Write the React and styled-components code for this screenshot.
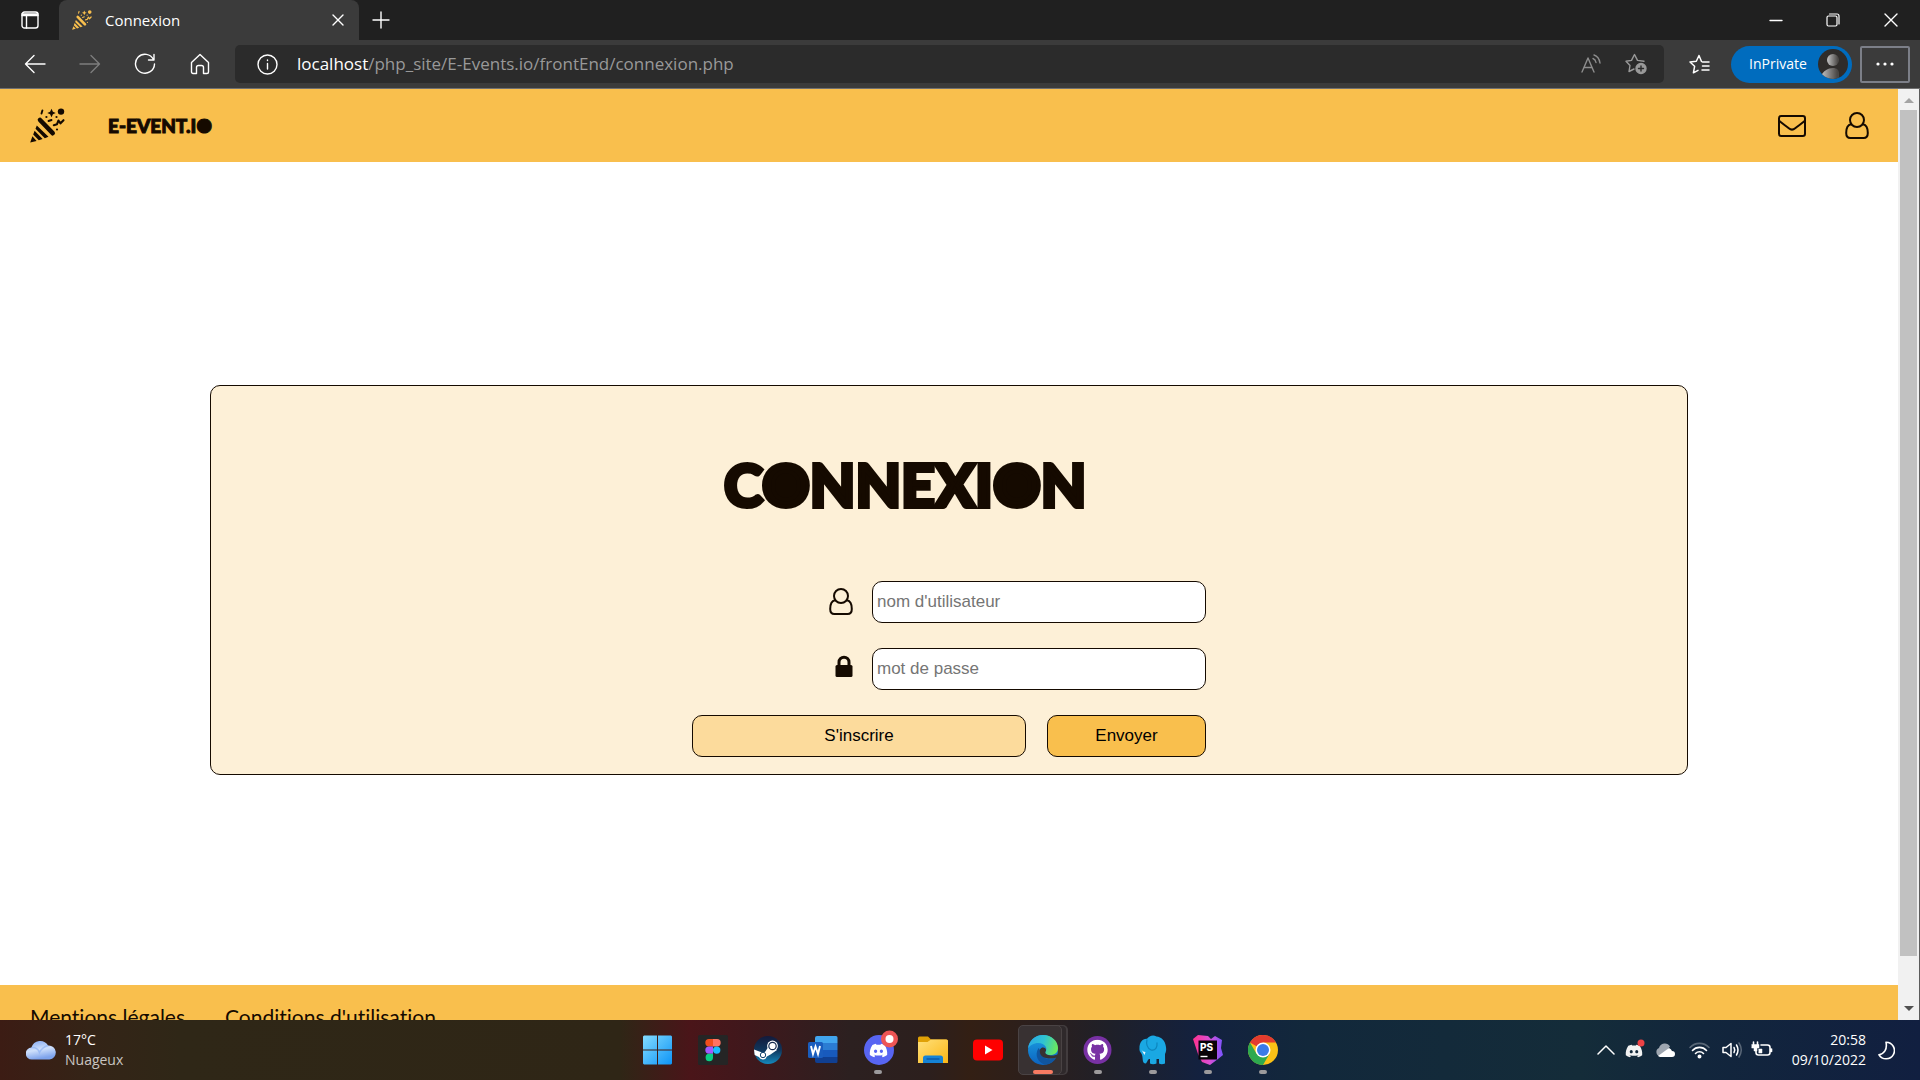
import React from 'react';
import styled, { createGlobalStyle } from 'styled-components';
import { FaDiscord, FaGithub } from 'react-icons/fa';

const GlobalStyle = createGlobalStyle`
  *, *::before, *::after { box-sizing: border-box; }
  html, body { margin: 0; padding: 0; }
  body { overflow: hidden; }
  svg { display: block; flex: none; }
  button { font: inherit; color: inherit; }
`;

const ui = '"Segoe UI", "Open Sans", "Noto Sans", sans-serif';
const sans = 'Arial, "Liberation Sans", sans-serif';
const ink = '#150a00';
const amber = '#f9bf4d';

const Desktop = styled.div`
  display: flex;
  flex-direction: column;
  height: 100vh;
  font-family: ${ui};
`;

/* ---------- Browser chrome ---------- */
const TabStrip = styled.div`
  display: flex;
  height: 40px;
  flex: none;
  background: #202020;
  color: #fff;
`;
const GhostButton = styled.button`
  display: flex;
  align-items: center;
  justify-content: center;
  flex: none;
  width: ${(p) => p.$w}px;
  padding: 0;
  border: 0;
  background: transparent;
  color: ${(p) => p.$color || '#fff'};
`;
const Tab = styled.div`
  display: flex;
  align-items: center;
  gap: 13px;
  width: 300px;
  padding: 0 4px 1px 13px;
  border-radius: 8px 8px 0 0;
  background: #3b3b3b;
  font-size: 15px;
  line-height: 20px;
`;
const TabTitle = styled.span`
  flex: 1;
`;
const WindowButtons = styled.div`
  display: flex;
  margin-left: auto;
`;
const Toolbar = styled.div`
  display: flex;
  align-items: center;
  flex: none;
  height: 49px;
  padding: 0 10px 0 7px;
  border-bottom: 1px solid #707070;
  background: #3b3b3b;
  color: #fff;
`;
const NavButtons = styled.div`
  display: flex;
  height: 38px;
`;
const AddressBar = styled.div`
  display: flex;
  align-items: center;
  flex: 1;
  gap: 19px;
  height: 38px;
  margin-left: 8px;
  padding: 0 17px 0 22px;
  border-radius: 5px;
  background: #2b2b2b;
  color: #999;
`;
const Url = styled.span`
  flex: 1;
  font-size: 17px;
  line-height: 24px;
  white-space: nowrap;
`;
const Host = styled.span`
  color: #fff;
`;
const AddressActions = styled.div`
  display: flex;
  align-items: center;
  gap: 24px;
`;
const Favorites = styled(GhostButton)`
  margin: 0 10px 0 14px;
`;
const PrivateBadge = styled.button`
  display: flex;
  align-items: center;
  justify-content: space-between;
  width: 121px;
  height: 37px;
  margin-right: 8px;
  padding: 0 4px 0 18px;
  border: 0;
  border-radius: 19px;
  background: #006cbe;
  font-size: 14px;
  line-height: 20px;
`;
const MenuButton = styled.button`
  display: flex;
  align-items: center;
  justify-content: center;
  width: 50px;
  height: 37px;
  padding: 0;
  border: 2px solid #7c7f88;
  border-radius: 2px;
  background: transparent;
`;

/* ---------- Web page ---------- */
const Viewport = styled.div`
  display: flex;
  flex: 1;
  min-height: 0;
  border-right: 1px solid #5c5c5c;
  background: #fff;
`;
const Page = styled.div`
  display: flex;
  flex-direction: column;
  flex: 1;
  overflow: hidden;
  color: ${ink};
`;
const SiteHeader = styled.header`
  display: flex;
  align-items: center;
  flex: none;
  height: 73px;
  padding: 0 29px 0 30px;
  background: ${amber};
`;
const Brand = styled.a`
  display: flex;
  align-items: center;
  gap: 43px;
  color: inherit;
  text-decoration: none;
  font: 900 19px/24px Lato, sans-serif;
  -webkit-text-stroke: 1px currentColor;
`;
const HeaderLinks = styled.nav`
  display: flex;
  align-items: center;
  gap: 39px;
  margin-left: auto;
`;
const IconLink = styled.a`
  color: inherit;
`;
/* A capital O whose counter is filled in */
const Disc = styled.span`
  background: radial-gradient(circle closest-side at 50% 50%, currentColor 70%, transparent 72%);
`;
const Main = styled.main`
  display: flex;
  align-items: center;
  flex: 0 0 calc(100% - 108px);
  padding: 12px 210px 0;
`;
const Card = styled.section`
  display: flex;
  flex-direction: column;
  align-items: center;
  flex: 1;
  padding: 63px 0 17px;
  border: 1px solid ${ink};
  border-radius: 10px;
  background: #fdf0d7;
`;
const Form = styled.form`
  display: flex;
  flex-direction: column;
  gap: 25px;
  width: 514px;
`;
const Title = styled.h1`
  margin: 0 0 35px 32px;
  font: 900 59px/72px Lato, sans-serif;
  -webkit-text-stroke: 4px currentColor;
  white-space: nowrap;
`;
const Row = styled.div`
  display: flex;
  justify-content: space-between;
  align-items: center;
`;
const Field = styled.label`
  display: flex;
  align-items: center;
  justify-content: flex-end;
  gap: 19px;
`;
const TextInput = styled.input`
  width: 334px;
  height: 42px;
  padding: 0 4px;
  border: 1px solid ${ink};
  border-radius: 10px;
  background: #fff;
  font: 17px/20px ${sans};
  &::placeholder { color: #757575; }
`;
const FormButton = styled.button`
  width: ${(p) => p.$w}px;
  height: 42px;
  padding: 0;
  border: 1px solid ${ink};
  border-radius: 10px;
  background: ${(p) => p.$bg};
  color: #000;
  font: 17px/20px ${sans};
`;
const SiteFooter = styled.footer`
  display: flex;
  flex: none;
  gap: 40px;
  height: 73px;
  padding: 20px 30px;
  background: ${amber};
`;
const FooterLink = styled.a`
  color: inherit;
  text-decoration: none;
  font: 21px/24px Lato, sans-serif;
  font-variant-ligatures: none;
`;
const ScrollTrack = styled.div`
  display: flex;
  flex-direction: column;
  align-items: center;
  width: 21px;
  padding: 9px 0 8px;
  background: #f1f1f1;
`;
const ScrollThumb = styled.div`
  flex: 0 1 846px;
  width: 17px;
  margin: 6px 0 auto;
  background: #c1c1c1;
`;

/* ---------- Taskbar ---------- */
const Taskbar = styled.footer`
  display: grid;
  grid-template-columns: 1fr auto 1fr;
  align-items: center;
  flex: none;
  height: 60px;
  color: #fff;
  font-size: 14px;
  line-height: 20px;
  background: linear-gradient(90deg, #3c1c14 0, #342417 90px, #2f2717 180px, #2f2616 620px, #4a1519 690px, #3f181c 750px, #2c2020 850px, #2c1f1d 930px, #331f14 970px, #281f20 1060px, #1f2029 1110px, #13213f 1200px, #12283b 1310px, #142c39 1580px, #12263c 1700px, #111f40 1920px);
`;
const Weather = styled.div`
  display: flex;
  align-items: center;
  gap: 9px;
  padding-left: 26px;
`;
const Muted = styled.div`
  color: #c9c5c1;
`;
const Apps = styled.div`
  display: flex;
`;
const AppButton = styled.button`
  display: flex;
  flex-direction: column;
  align-items: center;
  width: 55px;
  height: 50px;
  padding: 10px 0 1px;
  border: 0;
  background: transparent;
`;
const ActiveApp = styled(AppButton)`
  width: 44px;
  margin: 0 8px 0 3px;
  padding: 9px 0 0 6px;
  border: 1px solid #4a4344;
  border-radius: 5px;
  background: #383132;
  box-shadow: 5px 0 0 -1px #2f292b, 6px 0 0 0 #423c3e;
`;
const Indicator = styled.span`
  width: ${(p) => (p.$active ? 20 : 8)}px;
  height: 4px;
  margin-top: auto;
  border-radius: 2px;
  background: ${(p) => (p.$active ? '#f87b62' : '#9c9a9c')};
`;
const Badged = styled.span`
  margin: -6px 0 0 4px;
`;
const Tray = styled.div`
  display: flex;
  align-items: center;
  justify-content: flex-end;
  padding-right: 25px;
`;
const TrayIcons = styled.div`
  display: flex;
  align-items: center;
  gap: 9px;
  margin-right: 19px;
`;
const Clock = styled.div`
  margin-right: 12px;
  text-align: right;
`;

/* ---------- Drawings ---------- */
const Line = ({ w, h = w, vb, sw = 1.4, children }) => (
  <svg width={w} height={h} viewBox={vb || `0 0 ${w} ${h}`} fill="none" stroke="currentColor" strokeWidth={sw} strokeLinecap="round" strokeLinejoin="round" aria-hidden="true">{children}</svg>
);

const Popper = ({ size, color }) => (
  <svg width={size} height={size} viewBox="0 0 35 35" fill={color} aria-hidden="true">
    <path d="M6.800 17.500 18.500 28.800 14.800 30.200 5.500 20.800z M4.600 22.800 12.600 30.900 8.800 32.300 3.200 26.500z M2.400 28.300 6.600 33 .2 34.500z" />
    <path d="M10 12 22.700 25.200" stroke={color} strokeWidth="4.600" strokeLinecap="round" />
    <path d="M21.500 0.800 22.900 3.800 25.700 5 22.900 6.200 21.500 9.200 20.100 6.200 17.300 5 20.100 3.800z" />
    <circle cx="31" cy="3.600" r="3.200" />
    <circle cx="26.500" cy="9" r="1.100" />
    <circle cx="16.400" cy="9" r="1.100" />
    <circle cx="27" cy="21.500" r="1.100" />
    <path d="M12.400 2.500 11.500 5.500 M18.500 13 21.500 12" fill="none" stroke={color} strokeWidth="1.900" strokeLinecap="round" />
    <path d="M23.800 17.200 27 16.200 28.500 12.500 30.500 15.300 33.500 12.200" fill="none" stroke={color} strokeWidth="2.100" strokeLinecap="round" strokeLinejoin="round" />
  </svg>
);
const UserOutline = () => (
  <Line w={24} h={28} sw={2}>
    <circle cx="12" cy="8" r="7" />
    <path d="M6 12.300C3 12.900 1.200 16.300 1.200 21c0 3.200 1.600 5 4.200 5h13.200c2.600 0 4.200-1.800 4.200-5 0-4.700-1.800-8.100-4.800-8.700" />
  </Line>
);
const Envelope = () => (
  <Line w={28} h={22} sw={2}>
    <rect x="1" y="1" width="26" height="20" rx="2.2" />
    <path d="M1.4 6c3 2.600 6.600 5 9.400 7.300 2.300 1.900 4.100 1.900 6.400 0C20 11 23.600 8.600 26.600 6" />
  </Line>
);
const Lock = () => (
  <svg width="18" height="28" viewBox="0 0 18 28" aria-hidden="true">
    <path d="M4 11V7.200a5 5 0 0 1 10 0V11" fill="none" stroke={ink} strokeWidth="3" />
    <rect x="0.500" y="10" width="17" height="12" rx="1.500" fill={ink} />
  </svg>
);

const Avatar = () => (
  <svg width="30" height="30" viewBox="0 0 30 30" aria-hidden="true">
    <defs>
      <linearGradient id="av"><stop stopColor="#c4c4c4" /><stop offset=".9" stopColor="#4a4745" /></linearGradient>
      <clipPath id="avc"><circle cx="15" cy="15" r="15" /></clipPath>
    </defs>
    <circle cx="15" cy="15" r="15" fill="#2f2c2a" />
    <g clipPath="url(#avc)" fill="url(#av)"><circle cx="15" cy="11" r="6" /><path d="M3 27c2-5 7-8 12-8 4 0 6 2 6 6v6H3z" /></g>
  </svg>
);
const Cloud = () => (
  <svg width="30" height="20" viewBox="0 0 30 20" aria-hidden="true">
    <defs><linearGradient id="cl" x1="0" y1="0" x2="0.300" y2="1"><stop stopColor="#7fa6f2" /><stop offset=".55" stopColor="#cfe0fb" /><stop offset="1" stopColor="#7ea3ec" /></linearGradient></defs>
    <path d="M6 19.500a6 6 0 0 1-.5-12A9 9 0 0 1 22 5.500a7 7 0 0 1 1.500 14z" fill="url(#cl)" />
    <path d="M5.500 7.500c4-.5 7 2 8 5 2-4 5-6 8.500-7" fill="none" stroke="#8fb2f4" strokeWidth="1.500" opacity=".7" />
  </svg>
);
const Icon = ({ children }) => <svg width="30" height="30" viewBox="0 0 30 30" aria-hidden="true">{children}</svg>;

const Windows = () => (
  <Icon>
    <defs><linearGradient id="wn" x1="0" y1="0" x2="1" y2="1"><stop stopColor="#84dcff" /><stop offset="1" stopColor="#0d94f6" /></linearGradient></defs>
    <path d="M1 .5h13v14H0v-13zM15 .5h13l1 1v13H15zM0 15.500h14v14H1l-1-1zM15 15.500h14v13l-1 1H15z" fill="url(#wn)" />
  </Icon>
);
const Figma = () => (
  <Icon>
    <rect width="30" height="30" rx="1.500" fill="#252525" />
    <path d="M15 4h-4a3.700 3.700 0 0 0 0 7.400h4z" fill="#f24e1e" /><path d="M15 4h4a3.700 3.700 0 0 1 0 7.400h-4z" fill="#ff7262" />
    <path d="M15 11.400h-4a3.700 3.700 0 0 0 0 7.400h4z" fill="#a259ff" /><circle cx="18.700" cy="15.100" r="3.700" fill="#1abcfe" />
    <path d="M15 18.800h-4a3.700 3.700 0 1 0 4 3.700z" fill="#0acf83" />
  </Icon>
);
const Steam = () => (
  <Icon>
    <defs><linearGradient id="st" x1="0" y1="0" x2="0" y2="1"><stop stopColor="#131a3b" /><stop offset=".5" stopColor="#10365c" /><stop offset="1" stopColor="#1489bd" /></linearGradient></defs>
    <circle cx="15" cy="15" r="14" fill="url(#st)" />
    <path d="M1 14.500 9 17.600l3-.7 3.500-5.200L24 15l-6.500 4.500-3.600 2a4.300 4.300 0 0 1-8 .6L1.700 20z" fill="#fff" />
    <circle cx="19.500" cy="11" r="5.400" fill="#fff" /><circle cx="19.500" cy="11" r="3.700" fill="none" stroke="#14294d" strokeWidth="1.200" />
    <circle cx="10" cy="20" r="2.700" fill="none" stroke="#14456f" strokeWidth="1" />
  </Icon>
);
const Word = () => (
  <Icon>
    <path d="M7 3a2 2 0 0 1 2-2h19a1.500 1.500 0 0 1 1.500 1.500V8H7z" fill="#41a5ee" /><path d="M7 8h22.500v7H7z" fill="#2b7cd3" />
    <path d="M7 15h22.500v7H7z" fill="#185abd" /><path d="M7 22h22.500v4.500A1.500 1.500 0 0 1 28 28H9a2 2 0 0 1-2-2z" fill="#103f91" />
    <rect y="7" width="15" height="16" rx="1.500" fill="#1a5dbe" />
    <path d="m3 11 2 8 2.500-7.500L10 19l2-8" fill="none" stroke="#fff" strokeWidth="1.900" />
  </Icon>
);
const Discord = () => (
  <Badged>
    <svg width="36" height="36" viewBox="-2 -6 36 36" aria-hidden="true">
      <circle cx="15" cy="15" r="15" fill="#5865f2" />
      <g transform="translate(5 6)"><FaDiscord size={19} color="#fff" /></g>
      <circle cx="25.500" cy="4" r="8.500" fill="#ed5555" /><circle cx="25.500" cy="4" r="4" fill="#fff" />
    </svg>
  </Badged>
);
const Folder = () => (
  <Icon>
    <defs><linearGradient id="fo" x1="0" y1="0" x2="1" y2="1"><stop stopColor="#ffe07a" /><stop offset="1" stopColor="#fbb716" /></linearGradient></defs>
    <path d="M0 3a1.500 1.500 0 0 1 1.500-1.500H10L13 4.500H28A2 2 0 0 1 30 6.500V12H0z" fill="#e0a106" />
    <path d="M0 7h9.500L13 4.500h15.500A1.500 1.500 0 0 1 30 6v22H0z" fill="url(#fo)" />
    <path d="M5 28v-5a2.500 2.500 0 0 1 2.500-2.500h15A2.500 2.500 0 0 1 25 23v5z" fill="#1583d6" /><path d="M8.500 24h13" stroke="#0b58a8" strokeWidth="1.500" />
  </Icon>
);
const YouTube = () => (
  <Icon><rect y="4.500" width="30" height="21" rx="4" fill="#f00" /><path d="M12 10.500v9l7.500-4.500z" fill="#fff" /></Icon>
);
const Edge = () => (
  <Icon>
    <defs>
      <linearGradient id="e1" x1="0" y1=".3" x2="1" y2=".5"><stop stopColor="#2aa9e6" /><stop offset=".5" stopColor="#2fc3d2" /><stop offset="1" stopColor="#6bea5b" /></linearGradient>
      <linearGradient id="e2" x1="0" y1="0" x2="0" y2="1"><stop stopColor="#1ba0e2" /><stop offset="1" stopColor="#0c63c0" /></linearGradient>
    </defs>
    <circle cx="15" cy="15" r="15" fill="url(#e2)" />
    <path d="M10.500 13C6 20 10 28.500 18 29.700c4.500-.6 8-3.200 10-6.700-7 3-15.500 0-15.300-7z" fill="#10559f" />
    <path d="M0 13.500C1 5.500 7 0 15 0c8.500 0 15 6 15 13 0 4.500-3.500 7-7.500 7-4.500 0-6-1.500-5-3 2.500-3.500-.5-9-7-9C5.500 8 1.500 10.500 0 13.500z" fill="url(#e1)" />
    <path d="M12 14.500c1.500-3 5.500-2.500 6 .3.200 1.200-.8 1.900-.7 3 .2 2.300 5.700 3.500 10.500 2.200 2.500-1.500 2.400 0 1.200 2.200C25 24.500 10 25 12 14.500z" fill="#383132" />
  </Icon>
);
const GitHub = () => (
  <Icon><circle cx="14.500" cy="15" r="14" fill="#7831a4" /><g transform="translate(4 4.500)"><FaGithub size={21} color="#fff" /></g></Icon>
);
const Elephant = () => (
  <Icon>
    <path d="M1.500 15C1 8 4 3.500 9 3.800 11 1 15-.5 18.500 1.500c5 .5 8.500 4 9.300 9.500.8 4 .2 6-.8 8v9.500c-2 1-4.500 1-6 0V24h-2.500v4.500c-2 1-5 1-6.500 0V24c-1.500 0-2 .5-2.500 2l-1.500 2.500C3 28.500 6 22 3 18c-1-1-1.500-2-1.500-3z" fill="#1aa8e3" />
    <path d="M9 4.500c-1 4 0 9 4 10.500 4.500 1 6.500-3 6-7.500" fill="none" stroke="#0d85bd" strokeWidth="1.200" /><path d="M3 14c1 2 2.500 3 4.500 3L6.500 20z" fill="#e9f6fc" />
  </Icon>
);
const PhpStorm = () => (
  <Icon>
    <defs><linearGradient id="ps"><stop stopColor="#ff318c" /><stop offset=".55" stopColor="#d94fd5" /><stop offset="1" stopColor="#7a55ff" /></linearGradient></defs>
    <path d="M0 4 5 0l10 1 3 3 4-3 7 4-1 8 2 7-5 4-8 6-8-3-4-8z" fill="url(#ps)" />
    <rect x="5.500" y="5.500" width="18.500" height="19" fill="#080308" />
    <text x="7" y="15.500" fontFamily="Inter, sans-serif" fontSize="10" fontWeight="800" fill="#fff">PS</text><path d="M7.500 21.500h7" stroke="#fff" strokeWidth="1.400" />
  </Icon>
);
const Chrome = () => (
  <Icon>
    <circle cx="15" cy="15" r="15" fill="#fbc116" />
    <path d="M15 15 2 7.500A15 15 0 0 1 28 7.500H15z" fill="#e33b2e" /><path d="M2 7.500A15 15 0 0 0 15 30l6.500-11.200L15 15l-6.500 3.800z" fill="#2da94f" />
    <circle cx="15" cy="15" r="7.500" fill="#fff" /><circle cx="15" cy="15" r="6" fill="#3a7be8" />
  </Icon>
);

const leading = [['Démarrer', Windows], ['Figma', Figma], ['Steam', Steam], ['Word', Word], ['Discord', Discord, true], ['Explorateur', Folder], ['YouTube', YouTube]];
const trailing = [['GitHub Desktop', GitHub, true], ['MAMP', Elephant, true], ['PhpStorm', PhpStorm, true], ['Chrome', Chrome, true]];
const renderApp = ([name, Glyph, running]) => (
  <AppButton key={name} aria-label={name}><Glyph />{running && <Indicator />}</AppButton>
);

export default function App() {
  return (
    <Desktop>
      <GlobalStyle />
      <TabStrip>
        <GhostButton $w={59} aria-label="Onglets">
          <Line w={18}><rect x="1" y="1" width="16" height="16" rx="2.500" /><path d="M1 3h16M1 4.500h16M5.500 5v12" /></Line>
        </GhostButton>
        <Tab>
          <Popper size={20} color={amber} />
          <TabTitle>Connexion</TabTitle>
          <GhostButton $w={34} aria-label="Fermer l'onglet"><Line w={12}><path d="m1 1 10 10M11 1 1 11" /></Line></GhostButton>
        </Tab>
        <GhostButton $w={43} aria-label="Nouvel onglet"><Line w={18}><path d="M9 1v16M1 9h16" /></Line></GhostButton>
        <WindowButtons>
          <GhostButton $w={57} aria-label="Réduire"><Line w={14}><path d="M1 7.500h12" /></Line></GhostButton>
          <GhostButton $w={58} aria-label="Restaurer"><Line w={14} sw={1.200}><rect x="1" y="3" width="10" height="10" rx="1.500" /><path d="M3.500 1H11a2 2 0 0 1 2 2v8" /></Line></GhostButton>
          <GhostButton $w={58} aria-label="Fermer"><Line w={14}><path d="m1 1 12 12M13 1 1 13" /></Line></GhostButton>
        </WindowButtons>
      </TabStrip>

      <Toolbar>
        <NavButtons>
          <GhostButton $w={55} aria-label="Retour"><Line w={22}><path d="M21 11H1.500M10 2.500 1.500 11l8.500 8.500" /></Line></GhostButton>
          <GhostButton $w={55} $color="#7d7d7d" aria-label="Avancer"><Line w={22}><path d="M1 11h19.500M12 2.500 20.500 11 12 19.500" /></Line></GhostButton>
          <GhostButton $w={55} aria-label="Actualiser"><Line w={22}><path d="M19.500 6.500A9.500 9.500 0 1 0 20.500 11M20 1.500v5.500h-5.500" /></Line></GhostButton>
          <GhostButton $w={55} aria-label="Accueil"><Line w={20} h={22}><path d="M1.500 9.500 10 1.500l8.500 8v9.500a1.500 1.500 0 0 1-1.500 1.500h-3.500v-6a2 2 0 0 0-2-2h-3a2 2 0 0 0-2 2v6H3A1.500 1.500 0 0 1 1.500 19z" /></Line></GhostButton>
        </NavButtons>
        <AddressBar>
          <GhostButton $w={21} aria-label="Informations du site"><Line w={21}><circle cx="10.500" cy="10.500" r="9.500" /><path d="M10.500 9.500v5.500M10.500 6v.5" /></Line></GhostButton>
          <Url><Host>localhost</Host>/php_site/E-Events.io/frontEnd/connexion.php</Url>
          <AddressActions>
            <GhostButton $w={20} $color="#8d8d8d" aria-label="Lecture à voix haute"><Line w={20}><path d="M1 18 7 4l6 14M3 13.500h8M12 4.500q2.500 1 3 4M13 1q5 1.500 6 8" /></Line></GhostButton>
            <GhostButton $w={22} $color="#999" aria-label="Ajouter aux favoris">
              <Line w={22}><path d="M9 16 4 18.500l1-6L1 8.200l5.500-.8L9.500 1.500 12.500 7.400 19 8.200" /><circle cx="16" cy="15.500" r="5" fill="currentColor" /><path d="M16 13v5M13.500 15.500h5" stroke="#2b2b2b" /></Line>
            </GhostButton>
          </AddressActions>
        </AddressBar>
        <Favorites $w={43} aria-label="Favoris"><Line w={21} sw={1.500}><path d="M12.500 7.500 10 1.500 7.300 7.200 1 8l4.600 4.300-1.200 6.500 4.600-2.500M13.500 8H20M13.500 12H20M13 16h7" /></Line></Favorites>
        <PrivateBadge>InPrivate<Avatar /></PrivateBadge>
        <MenuButton aria-label="Menu"><svg width="18" height="4" fill="#fff" aria-hidden="true"><circle cx="2" cy="2" r="1.600" /><circle cx="9" cy="2" r="1.600" /><circle cx="16" cy="2" r="1.600" /></svg></MenuButton>
      </Toolbar>

      <Viewport>
        <Page>
          <SiteHeader>
            <Brand href="#"><Popper size={35} color={ink} /><span>E-EVENT.I<Disc>O</Disc></span></Brand>
            <HeaderLinks>
              <IconLink href="#messages" aria-label="Messages"><Envelope /></IconLink>
              <IconLink href="#profil" aria-label="Profil"><UserOutline /></IconLink>
            </HeaderLinks>
          </SiteHeader>
          <Main>
            <Card>
              <Form onSubmit={(e) => e.preventDefault()}>
                <Title>C<Disc>O</Disc>NNEXI<Disc>O</Disc>N</Title>
                <Field><UserOutline /><TextInput type="text" aria-label="Nom d'utilisateur" placeholder="nom d'utilisateur" /></Field>
                <Field><Lock /><TextInput type="password" aria-label="Mot de passe" placeholder="mot de passe" /></Field>
                <Row>
                  <FormButton type="button" $w={334} $bg="#fcdb9c">S'inscrire</FormButton>
                  <FormButton type="submit" $w={159} $bg={amber}>Envoyer</FormButton>
                </Row>
              </Form>
            </Card>
          </Main>
          <SiteFooter>
            <FooterLink href="#mentions">Mentions légales</FooterLink>
            <FooterLink href="#conditions">Conditions d'utilisation</FooterLink>
          </SiteFooter>
        </Page>
        <ScrollTrack aria-hidden="true">
          <svg width="10" height="6"><path d="M5 0 10 5H0z" fill="#a3a3a3" /></svg>
          <ScrollThumb />
          <svg width="10" height="6"><path d="M0 0h10L5 5z" fill="#505050" /></svg>
        </ScrollTrack>
      </Viewport>

      <Taskbar>
        <Weather><Cloud /><div><div>17°C</div><Muted>Nuageux</Muted></div></Weather>
        <Apps>
          {leading.map(renderApp)}
          <ActiveApp aria-label="Edge"><Edge /><Indicator $active /></ActiveApp>
          {trailing.map(renderApp)}
        </Apps>
        <Tray>
          <TrayIcons>
            <Line w={18} h={12} sw={1.500}><path d="m1 10 8-8 8 8" /></Line>
            <svg width="22" height="22" viewBox="2 0 22 22" aria-hidden="true"><g transform="translate(3 3)"><FaDiscord size={18} color="#f2f2f2" /></g><circle cx="19" cy="4" r="3.500" fill="#ed4245" /></svg>
            <svg width="21" height="14" viewBox="0 0 21 14" aria-hidden="true"><path d="M5 13.500A4.500 4.500 0 0 1 4 5a6 6 0 0 1 11-1.500L10 10z" fill="#9ea6b0" /><path d="M3 13 14 5a5 5 0 0 1 3 3 3 3 0 0 1 0 6H5z" fill="#fff" /></svg>
            <Line w={28} h={18} sw={1.600}><path d="M5 6.500a13 13 0 0 1 19 0" opacity=".3" /><path d="M7.500 9.500a9.500 9.500 0 0 1 14 0M10.500 12.500a5.500 5.500 0 0 1 8 0" /><circle cx="14.500" cy="15.500" r="1.200" fill="currentColor" /></Line>
            <Line w={20} h={18} sw={1.500}><path d="M1 6.500v5h3l5 4V2.500l-5 4zM12 6.500q1.500 2.500 0 5M14.500 4q3 5 0 10" /><path d="M17 2q4.500 7 0 14" opacity=".3" /></Line>
            <Line w={22} h={18} sw={1.600}><path d="M10 4h6.500A2.500 2.500 0 0 1 19 6.500v5a2.500 2.500 0 0 1-2.500 2.500h-9A2.500 2.500 0 0 1 5 11.500V10M20.500 8v2.500M2.500 1v3M6.500 1v3" /><path d="M1 3.500h7v3.500H6v3H3V7H1zM8 8h3v4H8z" fill="currentColor" strokeWidth=".5" /></Line>
          </TrayIcons>
          <Clock><div>20:58</div><div>09/10/2022</div></Clock>
          <Line w={17} h={19} sw={1.600}><path d="M8 1.200a8.300 8.300 0 1 1-7 12.600C6 13 9.500 8.500 8 1.200z" /></Line>
        </Tray>
      </Taskbar>
    </Desktop>
  );
}
